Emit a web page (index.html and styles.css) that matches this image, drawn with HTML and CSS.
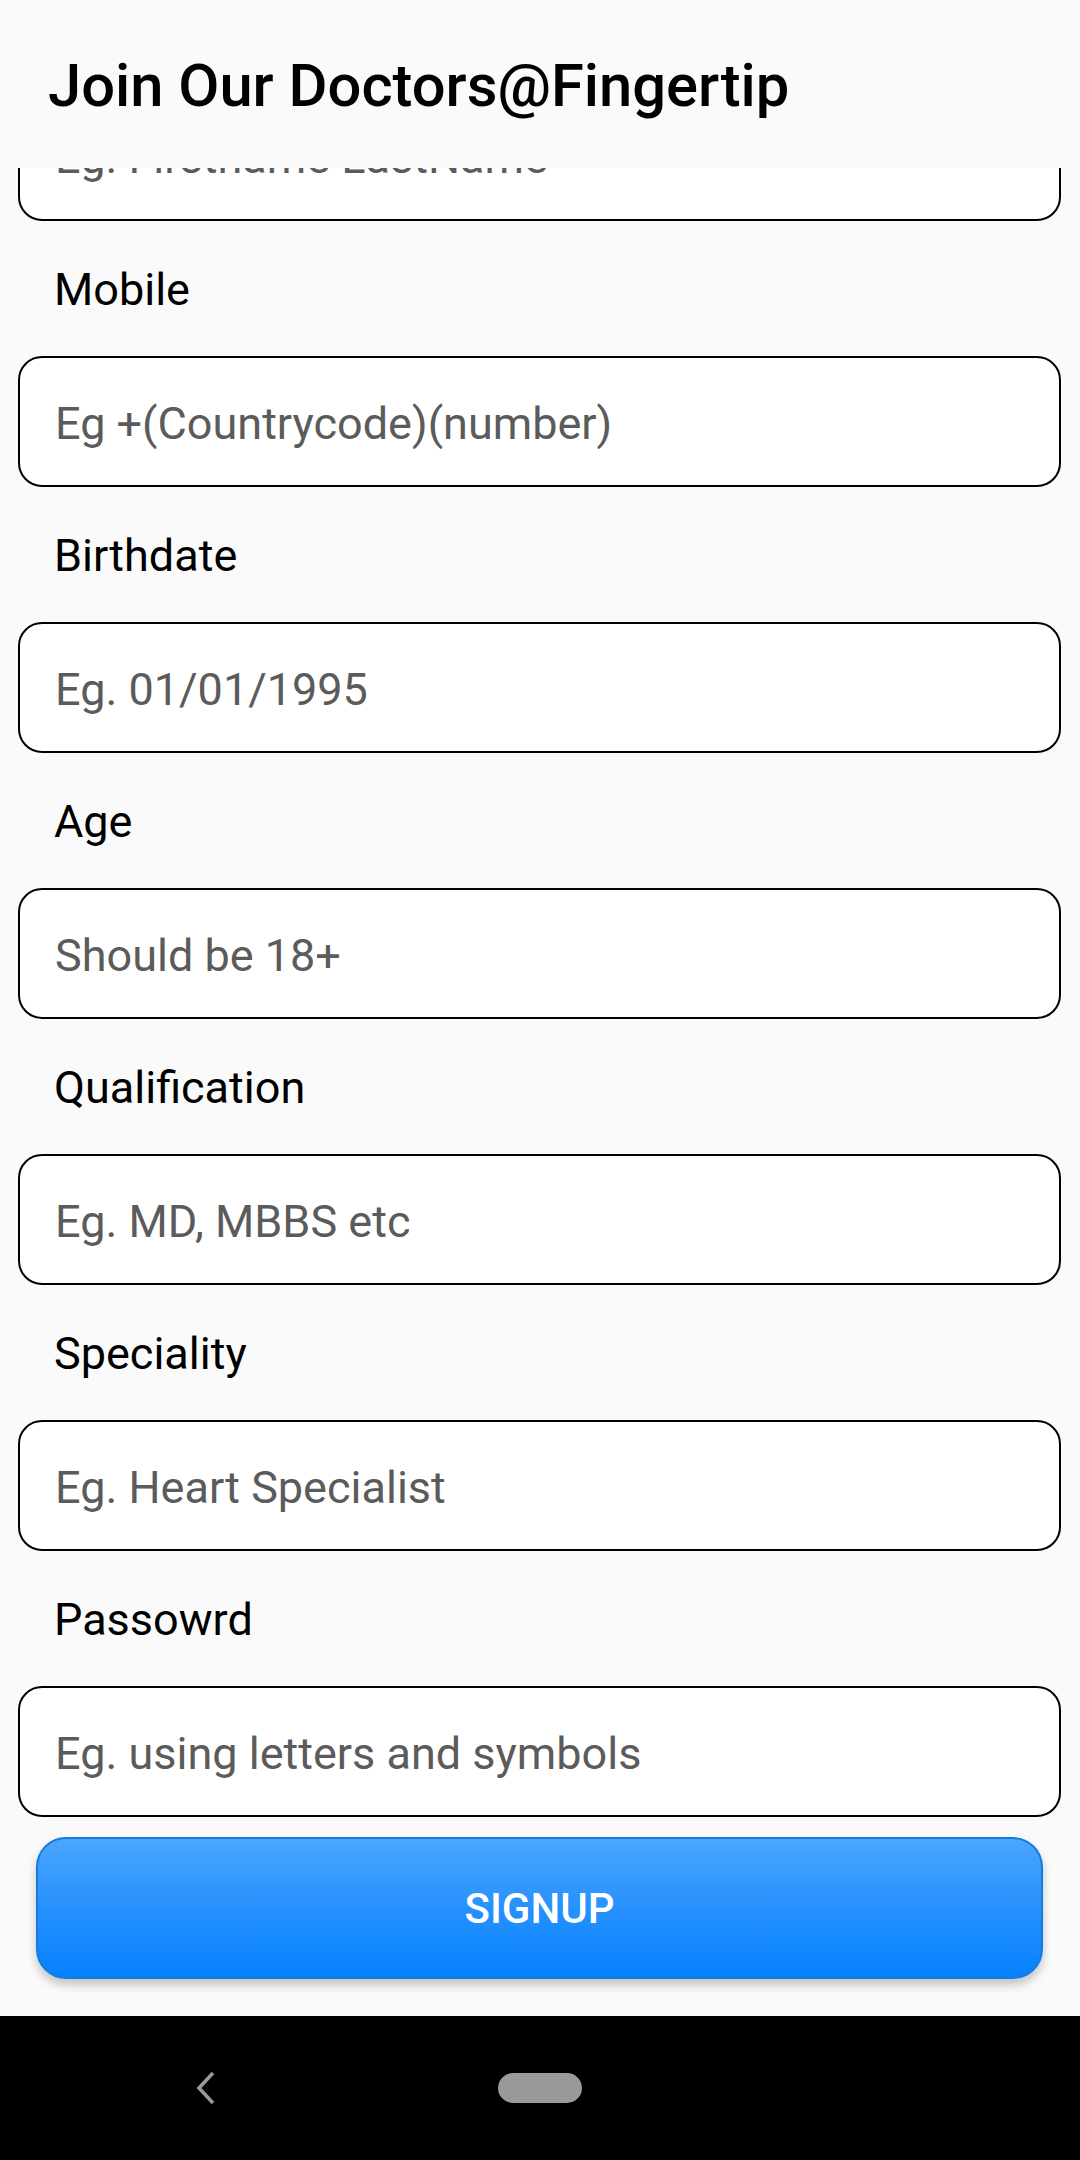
FILE: index.html
```html
<!DOCTYPE html>
<html>
<head>
<meta charset="utf-8">
<link rel="stylesheet" href="styles.css">
</head>
<body>
<div class="screen">
  <header class="appbar">
    <h1 class="title">Join Our Doctors@Fingertip</h1>
  </header>
  <main class="scroll">
    <div class="list">
      <div class="field first"><span class="hint">Eg. Firstname LastName</span></div>
      <div class="row">
        <div class="label">Mobile</div>
        <div class="field"><span class="hint">Eg +(Countrycode)(number)</span></div>
      </div>
      <div class="row">
        <div class="label">Birthdate</div>
        <div class="field"><span class="hint">Eg. 01/01/1995</span></div>
      </div>
      <div class="row">
        <div class="label">Age</div>
        <div class="field"><span class="hint">Should be 18+</span></div>
      </div>
      <div class="row">
        <div class="label">Qualification</div>
        <div class="field"><span class="hint">Eg. MD, MBBS etc</span></div>
      </div>
      <div class="row">
        <div class="label">Speciality</div>
        <div class="field"><span class="hint">Eg. Heart Specialist</span></div>
      </div>
      <div class="row">
        <div class="label">Passowrd</div>
        <div class="field"><span class="hint">Eg. using letters and symbols</span></div>
      </div>
    </div>
  </main>
  <div class="footer">
    <button class="signup">SIGNUP</button>
  </div>
  <nav class="navbar">
    <svg class="back" width="24" height="34" viewBox="0 0 24 34">
      <polyline points="19,2 5,17 19,32" fill="none" stroke="#9a9a9a" stroke-width="3.5"/>
    </svg>
    <div class="home"></div>
    <div class="spacer"></div>
  </nav>
</div>
</body>
</html>
```
FILE: styles.css
```css
html, body {
  margin: 0;
  padding: 0;
}
body {
  width: 1080px;
  height: 2160px;
  background: #fafafa;
  font-family: Roboto, "Liberation Sans", sans-serif;
}
.screen {
  width: 1080px;
  height: 2160px;
  display: flex;
  flex-direction: column;
}
.appbar {
  height: 168px;
  flex: none;
  background: #fafafa;
  display: flex;
  align-items: flex-start;
  padding-left: 48px;
  box-sizing: border-box;
  position: relative;
  z-index: 1;
}
.title {
  margin: 0;
  margin-top: 52px;
  font-size: 59.7px;
  font-weight: 500;
  line-height: 68px;
  color: #000;
  letter-spacing: 0;
}
.scroll {
  flex: 1;
  overflow: hidden;
}
.list {
  margin-top: -78px;
  display: flex;
  flex-direction: column;
}
.row {
  display: flex;
  flex-direction: column;
}
.label {
  margin-top: 41px;
  margin-bottom: 38px;
  padding-left: 54px;
  font-size: 45px;
  line-height: 56px;
  color: #000;
}
.field {
  margin: 0 19px 0 18px;
  height: 131px;
  box-sizing: border-box;
  border: 2px solid #000;
  border-radius: 24px;
  background: #fff;
  display: flex;
  align-items: center;
  padding-left: 35px;
  padding-top: 4px;
}
.hint {
  font-size: 45px;
  color: #5b5b5b;
  white-space: nowrap;
}
.footer {
  flex: none;
  padding: 18px 37px 37px 36px;
}
.signup {
  display: block;
  width: 100%;
  height: 142px;
  border: 2px solid #167ae0;
  border-radius: 30px;
  background: linear-gradient(to bottom, #4ba6fe 0%, #2a93fd 45%, #0581ff 100%);
  color: #fff;
  font-family: Roboto, "Liberation Sans", sans-serif;
  font-size: 42px;
  font-weight: 500;
  letter-spacing: 0;
  box-shadow: 0 6px 10px rgba(0, 0, 0, 0.22);
  padding: 0;
}
.navbar {
  flex: none;
  height: 144px;
  background: #000;
  display: flex;
  align-items: center;
  justify-content: center;
  gap: 0;
}
.back {
  margin-right: 280px;
}
.home {
  width: 84px;
  height: 30px;
  border-radius: 15px;
  background: #999;
}
.spacer {
  width: 304px;
}
```
